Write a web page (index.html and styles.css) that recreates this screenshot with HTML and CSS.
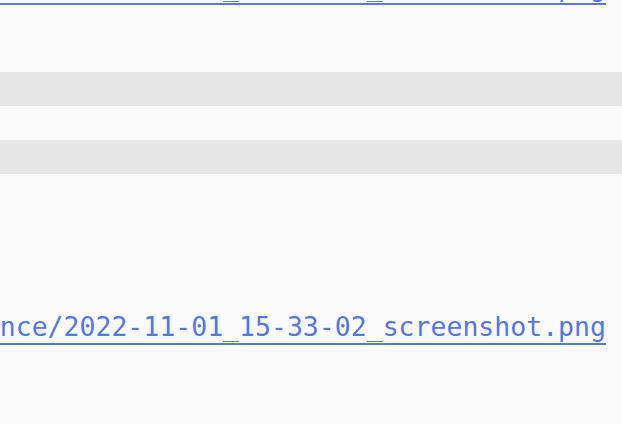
FILE: index.html
```html
<!DOCTYPE html>
<html>
<head>
<meta charset="utf-8">
<link rel="stylesheet" href="styles.css">
</head>
<body>
<div class="page">
  <div class="path-row path-top">
    <a class="path-link" href="#">/Users/demo/Documents/reference/2022-11-01_15-32-48_screenshot.png</a>
  </div>
  <div class="rows">
    <div class="row"></div>
    <div class="row stripe"></div>
    <div class="row"></div>
    <div class="row stripe"></div>
    <div class="row"></div>
  </div>
  <div class="path-row path-bottom">
    <a class="path-link" href="#">/Users/demo/Documents/reference/2022-11-01_15-33-02_screenshot.png</a>
  </div>
</div>
</body>
</html>
```
FILE: styles.css
```css
html, body {
  margin: 0;
  padding: 0;
  background: #fafafa;
}
.page {
  width: 622px;
  height: 424px;
  overflow: hidden;
  background: #fafafa;
}
.path-row {
  display: flex;
  justify-content: flex-end;
  padding-right: 16px;
  white-space: nowrap;
  font-family: "DejaVu Sans Mono", monospace;
  font-size: 26.5px;
  line-height: 30px;
  height: 30px;
}
.path-link {
  color: #5277e6;
  text-decoration: underline;
  text-decoration-thickness: 2px;
  text-underline-offset: 7px;
  text-decoration-skip-ink: none;
  flex: none;
}
.path-top {
  margin-top: -28px;
}
.rows {
  margin-top: 36px;
  display: flex;
  flex-direction: column;
}
.row {
  height: 34px;
}
.stripe {
  background: #e7e7e7;
}
.path-bottom {
  margin-top: 104px;
}
```
